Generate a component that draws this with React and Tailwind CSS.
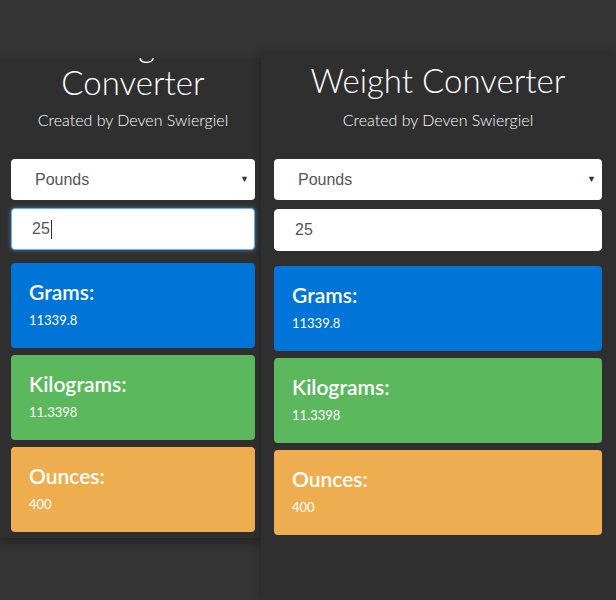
const RESULTS = [
  { label: 'Grams:', value: '11339.8', color: 'bg-[#0174d7]' },
  { label: 'Kilograms:', value: '11.3398', color: 'bg-[#5cb85c]' },
  { label: 'Ounces:', value: '400', color: 'bg-[#eead4e]' },
];

function UnitSelect() {
  return (
    <div className="flex h-[41px] items-center justify-between rounded-[4px] bg-white pl-[24px] pr-[6px] font-['Liberation_Sans',Arial,sans-serif] text-[16px] text-[#555]">
      <span>Pounds</span>
      <span className="text-[9px] text-[#333]">▼</span>
    </div>
  );
}

function ValueInput({ focused }) {
  return (
    <div
      className={
        focused
          ? "flex h-[42px] items-center rounded-[4px] border border-[#66afe9] bg-white pl-[20px] font-['Liberation_Sans',Arial,sans-serif] text-[16px] text-[#555] shadow-[0_0_4px_rgba(102,175,233,0.6)]"
          : "flex h-[42px] items-center rounded-[4px] border border-white bg-white pl-[20px] font-['Liberation_Sans',Arial,sans-serif] text-[16px] text-[#555]"
      }
    >
      <span>25</span>
      {focused && <span className="ml-[1px] h-[19px] w-px bg-[#333]" />}
    </div>
  );
}

function ResultCards({ startGap }) {
  return (
    <div className={`flex flex-col gap-[7px] ${startGap}`}>
      {RESULTS.map((r) => (
        <div key={r.label} className={`h-[85px] rounded-[4px] ${r.color} pl-[18px] pt-[16px] text-white`}>
          <div className="text-[21px] font-semibold leading-[25px]">{r.label}</div>
          <div className="mt-[7px] text-[13px] leading-[18px]">{r.value}</div>
        </div>
      ))}
    </div>
  );
}

export default function App() {
  return (
    <div className="flex h-[600px] w-[616px] items-start overflow-hidden bg-[#333] font-['Lato','Open_Sans',sans-serif] text-white">
      {/* left copy, scrolled so the first title line is hidden */}
      <div className="relative z-0 mt-[58px] flex h-[480px] w-[261px] shrink-0 flex-col overflow-hidden bg-[#2f2f2f] pl-[11px] pr-[6px] shadow-[0_4px_8px_rgba(0,0,0,0.3)]">
        <h1 className="-mt-[33px] text-center text-[33px] font-light leading-[38px]">Weight Converter</h1>
        <p className="mt-[7px] text-center text-[16px] font-light leading-6">Created by Deven Swiergiel</p>
        <div className="mt-[27px]">
          <UnitSelect />
        </div>
        <div className="mt-[8px]">
          <ValueInput focused />
        </div>
        <ResultCards startGap="mt-[13px]" />
      </div>

      <div className="relative z-10 mt-[54px] flex h-[546px] flex-1 flex-col bg-[#2f2f2f] pl-[13px] pr-[14px] pt-[9px] shadow-[0_0_8px_rgba(0,0,0,0.3)]">
        <h1 className="text-center text-[33px] font-light leading-[35px]">Weight Converter</h1>
        <p className="mt-[10px] text-center text-[16px] font-light leading-6">Created by Deven Swiergiel</p>
        <div className="mt-[27px]">
          <UnitSelect />
        </div>
        <div className="mt-[9px]">
          <ValueInput />
        </div>
        <ResultCards startGap="mt-[15px]" />
      </div>
    </div>
  );
}
